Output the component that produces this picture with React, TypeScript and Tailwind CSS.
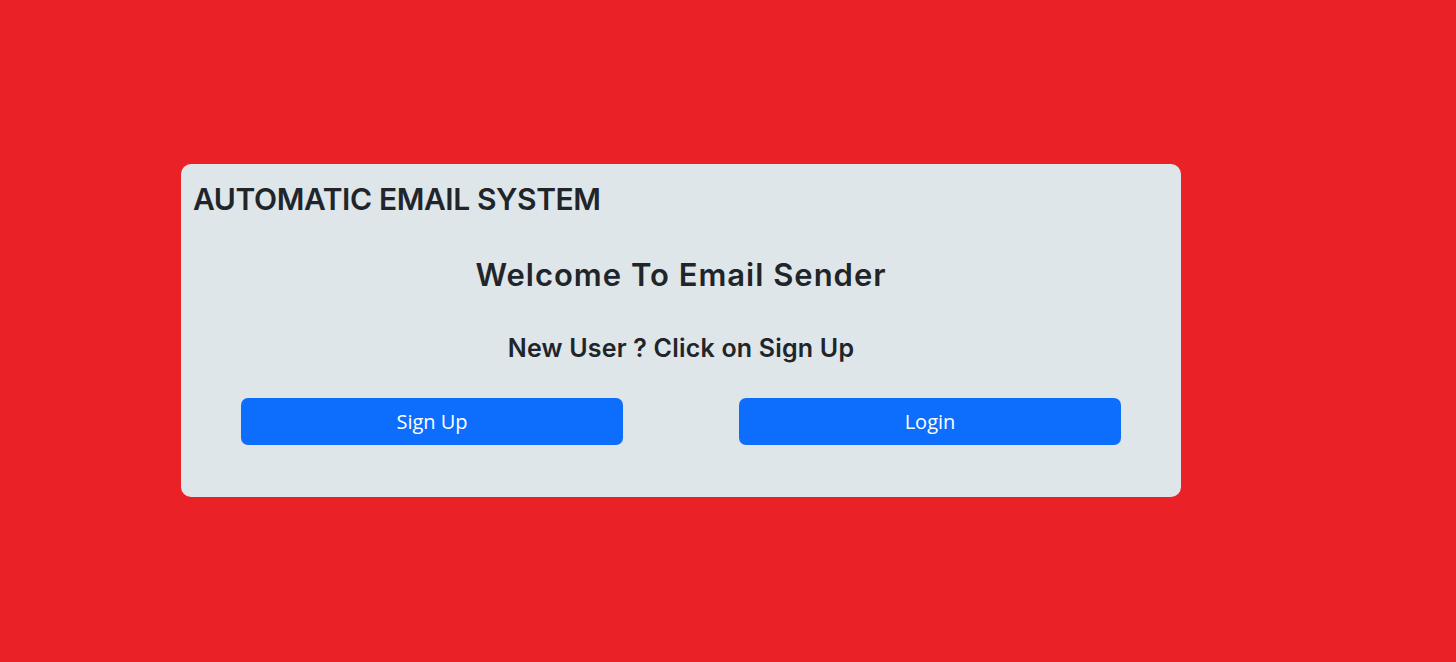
export default function App() {
  return (
    <div className="min-h-screen bg-[#EA2127] pt-[164px] pl-[181px]">
      <div className="w-[1000px] h-[333px] rounded-[10px] bg-[#DEE6EA] text-[#212529] font-['Inter','Noto_Sans',sans-serif]">
        <h2 className="px-3 pt-[16px] text-[30px] leading-[38px] font-semibold tracking-[-0.4px]">
          AUTOMATIC EMAIL SYSTEM
        </h2>
        <h2 className="mt-[38px] text-center text-[31px] leading-[38px] font-semibold tracking-[1px]">
          Welcome To Email Sender
        </h2>
        <h3 className="mt-[39px] text-center text-[25px] leading-[30px] font-semibold tracking-[0.2px]">
          New User ? Click on Sign Up
        </h3>
        <div className="mt-[35px] flex justify-between px-[60px] font-['Open_Sans','Noto_Sans',sans-serif]">
          <button className="w-[382px] h-[47px] rounded-[7px] bg-[#0D6EFD] text-white text-[20px]">
            Sign Up
          </button>
          <button className="w-[382px] h-[47px] rounded-[7px] bg-[#0D6EFD] text-white text-[20px]">
            Login
          </button>
        </div>
      </div>
    </div>
  );
}
